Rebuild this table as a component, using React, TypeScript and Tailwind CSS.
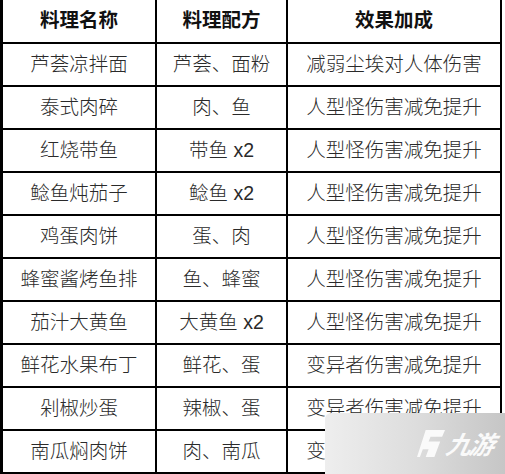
import React from "react";

const rows: [string, string, string][] = [
  ["芦荟凉拌面", "芦荟、面粉", "减弱尘埃对人体伤害"],
  ["泰式肉碎", "肉、鱼", "人型怪伤害减免提升"],
  ["红烧带鱼", "带鱼 x2", "人型怪伤害减免提升"],
  ["鲶鱼炖茄子", "鲶鱼 x2", "人型怪伤害减免提升"],
  ["鸡蛋肉饼", "蛋、肉", "人型怪伤害减免提升"],
  ["蜂蜜酱烤鱼排", "鱼、蜂蜜", "人型怪伤害减免提升"],
  ["茄汁大黄鱼", "大黄鱼 x2", "人型怪伤害减免提升"],
  ["鲜花水果布丁", "鲜花、蛋", "变异者伤害减免提升"],
  ["剁椒炒蛋", "辣椒、蛋", "变异者伤害减免提升"],
  ["南瓜焖肉饼", "肉、南瓜", "变异者伤害减免提升"],
];

const cell =
  "flex items-center justify-center border-r-2 border-b-2 border-black whitespace-nowrap";

export default function App() {
  return (
    <div className="relative w-[505px] h-[474px] bg-white overflow-hidden font-['Liberation_Sans','Noto_Sans_CJK_SC',sans-serif]">
      <div className="w-[502px] border-l-[3px] border-black grid grid-cols-[154px_131px_214px] text-[19.5px] text-[#2a2a2a]">
        <div className={`${cell} h-[44px] font-bold text-[#111]`}>料理名称</div>
        <div className={`${cell} h-[44px] font-bold text-[#111]`}>料理配方</div>
        <div className={`${cell} h-[44px] font-bold text-[#111]`}>效果加成</div>
        {rows.map((r) => (
          <React.Fragment key={r[0]}>
            <div className={`${cell} h-[43px] font-light`}>{r[0]}</div>
            <div className={`${cell} h-[43px] font-light`}>{r[1]}</div>
            <div className={`${cell} h-[43px] font-light`}>{r[2]}</div>
          </React.Fragment>
        ))}
      </div>

      {/* watermark */}
      <div className="absolute left-[325px] top-[413px] w-[180px] h-[61px] rounded-tl-md bg-gradient-to-r from-[#eeeeee] via-[#dddddd] to-[#c6c6c6] flex items-center pl-[92px] gap-[1px]">
        <svg width="29" height="31" viewBox="0 0 30 32" className="shrink-0">
          <path
            d="M9 2 H29 L26 9 H14 L12 14 H24 L18 30 H9 L12 22 H6 L3 30 H0 L9 2 Z"
            fill="#fafafa"
          />
        </svg>
        <span className="text-[25px] font-bold italic text-[#fafafa] leading-none tracking-[-2px] font-['Noto_Sans_CJK_SC',sans-serif] -skew-x-12">
          九游
        </span>
      </div>
    </div>
  );
}
